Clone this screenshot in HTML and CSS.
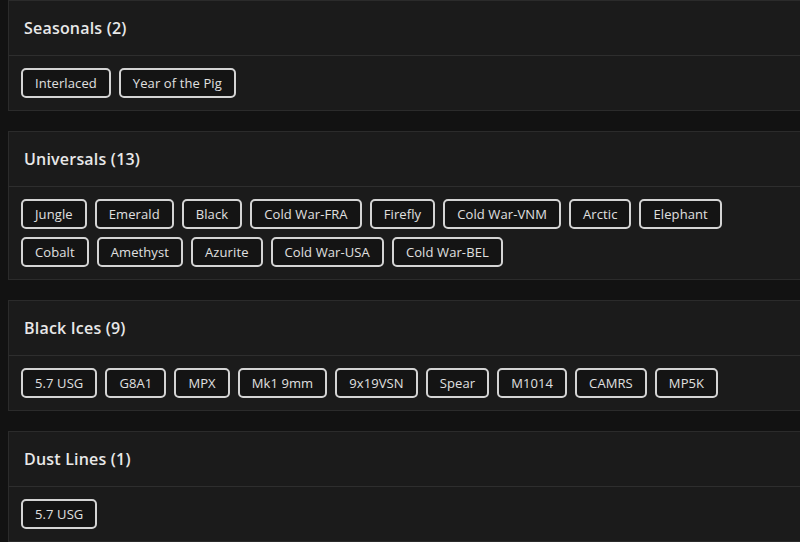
FILE: index.html
```html
<!DOCTYPE html>
<html lang="en">
<head>
    <meta charset="UTF-8">
    <meta name="viewport" content="width=device-width, initial-scale=1.0">
    <title>Skins</title>
    <link rel="stylesheet" href="styles.css">
</head>
<body>
    <div class="list">
        <div class="card">
            <div class="card-header">Seasonals (2)</div>
            <div class="card-body">
                <span class="tag">Interlaced</span>
                <span class="tag">Year of the Pig</span>
            </div>
        </div>

        <div class="card">
            <div class="card-header">Universals (13)</div>
            <div class="card-body">
                <span class="tag">Jungle</span>
                <span class="tag">Emerald</span>
                <span class="tag">Black</span>
                <span class="tag">Cold War-FRA</span>
                <span class="tag">Firefly</span>
                <span class="tag">Cold War-VNM</span>
                <span class="tag">Arctic</span>
                <span class="tag">Elephant</span>
                <span class="tag">Cobalt</span>
                <span class="tag">Amethyst</span>
                <span class="tag">Azurite</span>
                <span class="tag">Cold War-USA</span>
                <span class="tag">Cold War-BEL</span>
            </div>
        </div>

        <div class="card">
            <div class="card-header">Black Ices (9)</div>
            <div class="card-body">
                <span class="tag">5.7 USG</span>
                <span class="tag">G8A1</span>
                <span class="tag">MPX</span>
                <span class="tag">Mk1 9mm</span>
                <span class="tag">9x19VSN</span>
                <span class="tag">Spear</span>
                <span class="tag">M1014</span>
                <span class="tag">CAMRS</span>
                <span class="tag">MP5K</span>
            </div>
        </div>

        <div class="card">
            <div class="card-header">Dust Lines (1)</div>
            <div class="card-body">
                <span class="tag">5.7 USG</span>
            </div>
        </div>
    </div>
</body>
</html>
```

FILE: styles.css
```css
body {
    margin: 0;
    background: #121212;
    color: #e6e6e6;
    font-family: "Open Sans", "Liberation Sans", sans-serif;
    overflow: hidden;
}
.list {
    padding: 0 0 0 8px;
    width: 820px;
}
.card {
    background: #1b1b1b;
    border: 1px solid #2b2b2b;
    margin-bottom: 20px;
}
.card-header {
    padding: 14px 15px;
    line-height: 26px;
    font-size: 16px;
    font-weight: 600;
    letter-spacing: 0.2px;
    color: #e8e8e8;
    border-bottom: 1px solid #2e2e2e;
}
.card-body {
    display: flex;
    flex-wrap: wrap;
    gap: 8px;
    padding: 12px;
    width: 740px;
}
.tag {
    display: inline-block;
    height: 26px;
    line-height: 26px;
    padding: 0 12px;
    border: 2px solid #d4d4d4;
    border-radius: 5px;
    background: #141414;
    font-size: 13px;
    letter-spacing: 0.1px;
    color: #e0e0e0;
}
```
